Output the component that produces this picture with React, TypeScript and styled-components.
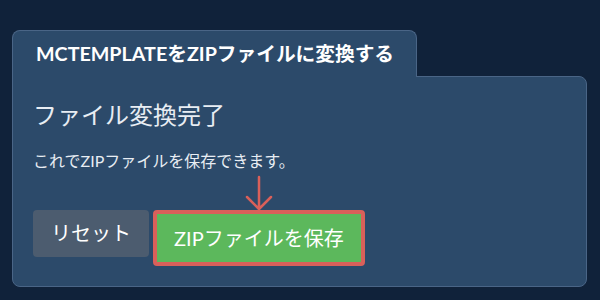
import React from 'react';
import styled, { createGlobalStyle } from 'styled-components';

const GlobalStyle = createGlobalStyle`
  * {
    box-sizing: border-box;
  }
  html, body {
    margin: 0;
    padding: 0;
    background: #10223a;
  }
  body {
    font-family: Lato, "Noto Sans CJK JP", sans-serif;
    color: #ffffff;
  }
`;

const Page = styled.div`
  width: 600px;
  height: 300px;
  padding: 30px 13px 0 12px;
  background: #10223a;
`;

const Tab = styled.div`
  position: relative;
  z-index: 1;
  display: inline-block;
  height: 47px;
  margin-bottom: -1px;
  padding: 0 22px 0 23px;
  background: #2c4a6a;
  border: 1px solid #4a6586;
  border-bottom: none;
  border-radius: 8px 8px 0 0;
  font-size: 19.7px;
  font-weight: 700;
  line-height: 46px;
  color: #ffffff;
`;

const Panel = styled.section`
  height: 211px;
  padding: 22px 20px 0;
  background: #2c4a6a;
  border: 1px solid #4a6586;
  border-radius: 0 8px 8px 8px;
`;

const Heading = styled.h2`
  margin: 0;
  font-size: 24px;
  font-weight: 400;
  line-height: 32px;
  color: #e8edf3;
`;

const Message = styled.p`
  margin: 18px 0 0;
  font-size: 16px;
  line-height: 24px;
  color: #e8edf3;
`;

const Actions = styled.div`
  display: flex;
  align-items: flex-start;
  gap: 4px;
  margin-top: 37px;
`;

const Button = styled.button<{ $variant: 'reset' | 'save' }>`
  position: relative;
  height: ${(p) => (p.$variant === 'save' ? '56px' : '47px')};
  padding: 0 ${(p) => (p.$variant === 'save' ? '17px' : '18px')};
  border: ${(p) => (p.$variant === 'save' ? '4px solid #d9605a' : 'none')};
  border-radius: 4px;
  background: ${(p) => (p.$variant === 'save' ? '#5cb85c' : '#4c5c6f')};
  font-family: Lato, "Noto Sans CJK JP", sans-serif;
  font-size: 20px;
  line-height: 47px;
  color: #ffffff;
  cursor: pointer;
`;

const Arrow = styled.svg`
  position: absolute;
  left: 50%;
  bottom: 100%;
  margin-bottom: 3px;
  transform: translateX(-50%);
  overflow: visible;
`;

export default function App() {
  return (
    <>
      <GlobalStyle />
      <Page>
        <Tab>MCTEMPLATEをZIPファイルに変換する</Tab>
        <Panel>
          <Heading>ファイル変換完了</Heading>
          <Message>これでZIPファイルを保存できます。</Message>
          <Actions>
            <Button $variant="reset">リセット</Button>
            <Button $variant="save">
              <Arrow width="28" height="35" viewBox="0 0 28 35">
                <path
                  d="M14 1 V33 M2 21 L14 33 L26 21"
                  fill="none"
                  stroke="#d9605a"
                  strokeWidth="2.5"
                  strokeLinecap="round"
                  strokeLinejoin="round"
                />
              </Arrow>
              ZIPファイルを保存
            </Button>
          </Actions>
        </Panel>
      </Page>
    </>
  );
}
